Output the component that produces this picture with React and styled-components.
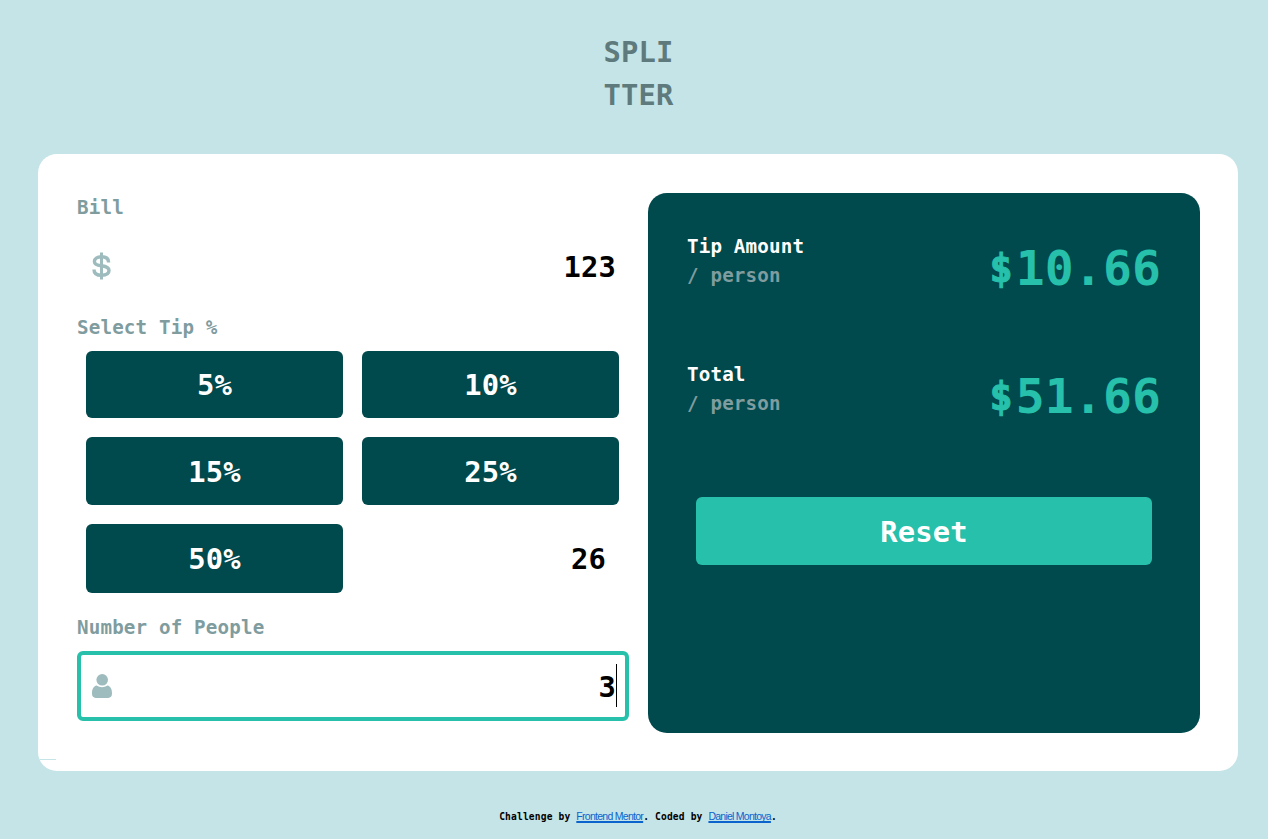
import React from "react";
import styled, { createGlobalStyle } from "styled-components";

const GlobalStyle = createGlobalStyle`
  * { box-sizing: border-box; }
  body {
    margin: 0;
    background: #c5e4e7;
    font-family: "DejaVu Sans Mono", "Liberation Mono", monospace;
    font-weight: 700;
    letter-spacing: 0.01em;
  }
`;

const Page = styled.div`
  height: 839px;
  display: flex;
  flex-direction: column;
  align-items: center;
  padding: 31px 30px 0 38px;
`;

const Title = styled.h1`
  margin: 0;
  height: 123px;
  padding-left: 1px;
  font-size: 28.8px;
  line-height: 43px;
  color: #5e7a7d;
`;

const Card = styled.main`
  position: relative;
  width: 1200px;
  height: 617px;
  padding: 39px 38px 38px 39px;
  display: grid;
  grid-template-columns: 552px 552px;
  column-gap: 19px;
  background: #fff;
  border-radius: 19px;
  overflow: hidden;

  &::after {
    content: "";
    position: absolute;
    left: 0;
    bottom: 11px;
    width: 18px;
    height: 1px;
    background: #c5e4e7;
  }
`;

const Form = styled.section`
  display: flex;
  flex-direction: column;
`;

const Label = styled.div`
  font-size: 19.2px;
  line-height: 29px;
  color: ${(p) => p.$color || "#7f9c9f"};
`;

const Field = styled.div`
  height: ${(p) => p.$height || 70}px;
  margin: ${(p) => p.$margin || "0"};
  padding: 0 9px 0 11px;
  display: flex;
  align-items: center;
  border: 4px solid ${(p) => (p.$focused ? "#26c0ab" : "transparent")};
  border-radius: 6px;
  font-size: 28.8px;
  line-height: 43px;
  color: #000;
`;

const Value = styled.span`
  margin-left: auto;
  padding-top: 2px;
`;

const Caret = styled.span`
  width: 1px;
  height: 43px;
  margin: 0 -1px 2px 0;
  background: #000;
`;

const TipGrid = styled.div`
  display: grid;
  grid-template-columns: 257px 257px;
  grid-template-rows: 67px 68px 69px;
  gap: 19px;
  margin: 9px 0 20px 9px;
`;

const Button = styled.button`
  height: ${(p) => p.$height || "100%"};
  margin: ${(p) => p.$margin || "0"};
  padding: 1px 0 0;
  border: 0;
  border-radius: 6px;
  background: ${(p) => (p.$accent ? "#26c0ab" : "#00494d")};
  color: #fff;
  font: inherit;
  font-size: 28.8px;
  letter-spacing: inherit;
`;

const Results = styled.section`
  display: flex;
  flex-direction: column;
  height: 540px;
  padding: 39px 39px 0;
  border-radius: 19px;
  background: #00494d;
`;

const Result = styled.div`
  display: flex;
  justify-content: space-between;
  height: 128px;
`;

const Amount = styled.div`
  display: flex;
  align-items: center;
  height: 72px;
  font-size: 48px;
  color: #26c0ab;
`;

const Currency = styled.span`
  margin-right: 3px;
  font-size: 38.4px;
  -webkit-text-stroke: 1px #26c0ab;
`;

const Footer = styled.footer`
  margin-top: 38px;
  font-size: 9.6px;
  line-height: 15px;
  white-space: pre;
  color: #000;
`;

const Link = styled.a`
  font-family: "Liberation Sans", sans-serif;
  font-weight: 400;
  font-size: 10.5px;
  letter-spacing: ${(p) => p.$tracking};
  color: #0b63ce;
  text-decoration: underline 2px;
  text-underline-offset: 1px;
  text-decoration-skip-ink: none;
`;

const DollarIcon = () => (
  <svg width="20" height="28" viewBox="0 0 20 28" fill="none" stroke="#9ebbbd">
    <path d="M9.5 0.5V27.5" strokeWidth="3" />
    <path
      d="M16.6 10.4C16.6 6.8 14 4.8 9.5 4.8C5 4.8 2.4 6.6 2.4 9.4C2.4 12.4 5 13.2 9.5 13.8C14 14.4 17 15.5 17 18.6C17 21.6 14 23.3 9.5 23.3C5 23.3 2 21.6 2 17.4"
      strokeWidth="3.4"
    />
  </svg>
);

const PersonIcon = () => (
  <svg width="20" height="24" viewBox="0 0 20 24" fill="#9ebbbd">
    <circle cx="10.2" cy="5.8" r="5.8" />
    <path d="M4.8 11.6C6.4 12.7 8.1 13.3 10 13.3S13.7 12.7 15.3 11.6C18.7 12.2 20 15.4 20 19.6C20 22.5 18.6 24 16.2 24H3.8C1.4 24 0 22.5 0 19.6C0 15.4 1.3 12.2 4.8 11.6Z" />
  </svg>
);

const tips = ["5%", "10%", "15%", "25%", "50%"];
const results = [
  { name: "Tip Amount", amount: "10.66" },
  { name: "Total", amount: "51.66" },
];

export default function App() {
  return (
    <>
      <GlobalStyle />
      <Page>
        <Title>
          SPLI
          <br />
          TTER
        </Title>
        <Card>
          <Form>
            <Label>Bill</Label>
            <Field $margin="9px 0 12px">
              <DollarIcon />
              <Value>123</Value>
            </Field>
            <Label>Select Tip %</Label>
            <TipGrid>
              {tips.map((tip) => (
                <Button key={tip}>{tip}</Button>
              ))}
              <Field $height={69}>
                <Value>26</Value>
              </Field>
            </TipGrid>
            <Label>Number of People</Label>
            <Field $focused $margin="9px 0 0">
              <PersonIcon />
              <Value>3</Value>
              <Caret />
            </Field>
          </Form>
          <Results>
            {results.map(({ name, amount }) => (
              <Result key={name}>
                <div>
                  <Label $color="#fff">{name}</Label>
                  <Label>/ person</Label>
                </div>
                <Amount>
                  <Currency>$</Currency>
                  {amount}
                </Amount>
              </Result>
            ))}
            <Button $accent $height="68px" $margin="9px 9px 0">
              Reset
            </Button>
          </Results>
        </Card>
        <Footer>
          Challenge by <Link $tracking="-0.72px">Frontend Mentor</Link>. Coded by{" "}
          <Link $tracking="-0.75px">Daniel Montoya</Link>.
        </Footer>
      </Page>
    </>
  );
}
